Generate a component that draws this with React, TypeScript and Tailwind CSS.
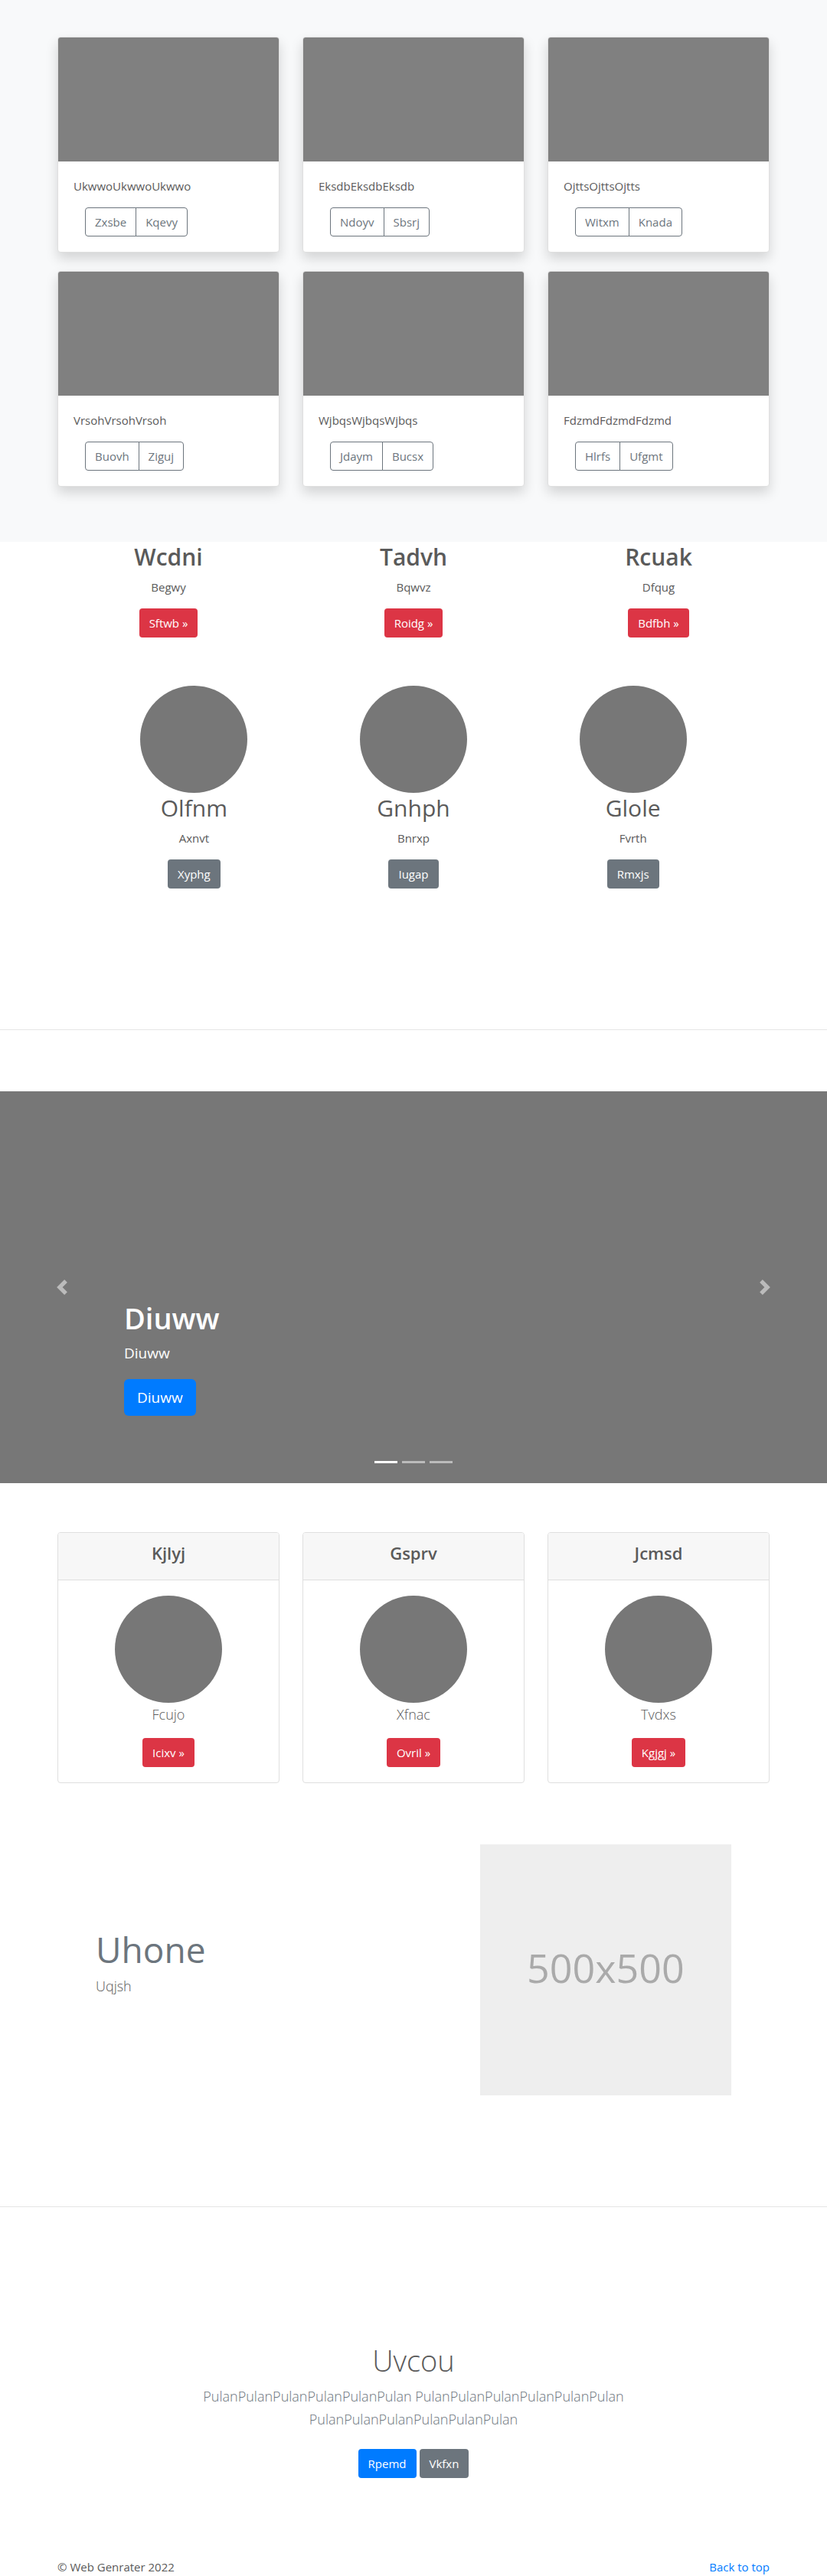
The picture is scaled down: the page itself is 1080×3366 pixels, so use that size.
import type { ReactNode } from "react";

const albumCards = [
  { text: "UkwwoUkwwoUkwwo", left: "Zxsbe", right: "Kqevy" },
  { text: "EksdbEksdbEksdb", left: "Ndoyv", right: "Sbsrj" },
  { text: "OjttsOjttsOjtts", left: "Witxm", right: "Knada" },
  { text: "VrsohVrsohVrsoh", left: "Buovh", right: "Ziguj" },
  { text: "WjbqsWjbqsWjbqs", left: "Jdaym", right: "Bucsx" },
  { text: "FdzmdFdzmdFdzmd", left: "Hlrfs", right: "Ufgmt" },
];

const topics = [
  { title: "Wcdni", text: "Begwy", action: "Sftwb »" },
  { title: "Tadvh", text: "Bqwvz", action: "Roidg »" },
  { title: "Rcuak", text: "Dfqug", action: "Bdfbh »" },
];

const people = [
  { title: "Olfnm", text: "Axnvt", action: "Xyphg" },
  { title: "Gnhph", text: "Bnrxp", action: "Iugap" },
  { title: "Glole", text: "Fvrth", action: "Rmxjs" },
];

const plans = [
  { title: "Kjlyj", text: "Fcujo", action: "Icixv »" },
  { title: "Gsprv", text: "Xfnac", action: "Ovril »" },
  { title: "Jcmsd", text: "Tvdxs", action: "Kgjgj »" },
];

const tones = {
  red: "bg-[#dc3545]",
  gray: "bg-[#6c757d]",
  blue: "bg-[#007bff]",
};

function ButtonLink({ tone, children }: { tone: keyof typeof tones; children: ReactNode }) {
  return (
    <a href="#" className={`inline-flex h-[38px] items-center rounded px-[13px] text-[15px] text-white ${tones[tone]}`}>
      {children}
    </a>
  );
}

function Circle() {
  return <div className="mx-auto size-[140px] rounded-full bg-[#777]" />;
}

function Album() {
  return (
    <section className="bg-[#f8f9fa] py-12">
      <div className="mx-auto grid max-w-[960px] grid-cols-3 gap-x-[30px] gap-y-6 px-[15px] pb-6">
        {albumCards.map((card) => (
          <article
            key={card.text}
            className="overflow-hidden rounded border border-[#dfdfdf] bg-white shadow-[0_8px_16px_rgba(0,0,0,0.15)]"
          >
            <div className="h-[162px] bg-[#808080]" />
            <div className="p-5">
              <p className="mb-4 leading-6">{card.text}</p>
              <div className="ml-[15px] flex text-[#6c757d]">
                <button type="button" className="h-[38px] rounded-l border border-[#6c757d] px-3">
                  {card.left}
                </button>
                <button type="button" className="-ml-px h-[38px] rounded-r border border-[#6c757d] px-3">
                  {card.right}
                </button>
              </div>
            </div>
          </article>
        ))}
      </div>
    </section>
  );
}

function Topics() {
  return (
    <section className="mx-auto grid max-w-[960px] grid-cols-3 text-center">
      {topics.map((topic) => (
        <div key={topic.title} className="flex flex-col items-center px-[15px] pb-4">
          <h2 className="mb-2 text-[30px] leading-[39px] font-semibold">{topic.title}</h2>
          <p className="mb-4 leading-6">{topic.text}</p>
          <ButtonLink tone="red">{topic.action}</ButtonLink>
        </div>
      ))}
    </section>
  );
}

function People() {
  return (
    <section className="mx-auto mt-[47px] grid max-w-[860px] grid-cols-3 pb-[104px] text-center">
      {people.map((person) => (
        <div key={person.title} className="flex flex-col items-center px-[15px]">
          <Circle />
          <h2 className="mb-2 text-[30px] leading-[39px]">{person.title}</h2>
          <p className="mb-4 leading-6">{person.text}</p>
          <ButtonLink tone="gray">{person.action}</ButtonLink>
        </div>
      ))}
    </section>
  );
}

function Carousel() {
  return (
    <section aria-label="Carousel" className="relative h-[512px] bg-[#777] text-white">
      <div className="flex h-full flex-col items-start justify-end px-[15%] pb-[88px]">
        <h1 className="mb-2 text-[38px] leading-[48px] font-semibold">Diuww</h1>
        <p className="mb-5 text-[19px] leading-7 font-medium">Diuww</p>
        <a href="#" className="inline-flex h-12 items-center rounded-md bg-[#007bff] px-[17px] text-[19px] font-medium">
          Diuww
        </a>
      </div>
      <button
        type="button"
        aria-label="Previous"
        className="absolute inset-y-0 left-0 flex w-[15%] items-center justify-center opacity-50"
      >
        <svg viewBox="0 0 8 8" className="size-5 fill-white">
          <path d="M5.25 0l-4 4 4 4 1.5-1.5L4.25 4l2.5-2.5L5.25 0z" />
        </svg>
      </button>
      <button
        type="button"
        aria-label="Next"
        className="absolute inset-y-0 right-0 flex w-[15%] items-center justify-center opacity-50"
      >
        <svg viewBox="0 0 8 8" className="size-5 fill-white">
          <path d="M2.75 0l-1.5 1.5L3.75 4l-2.5 2.5L2.75 8l4-4-4-4z" />
        </svg>
      </button>
      <div className="absolute inset-x-0 bottom-[26px] flex justify-center gap-1.5">
        <button type="button" aria-label="Slide 1" className="h-[3px] w-[30px] bg-white" />
        <button type="button" aria-label="Slide 2" className="h-[3px] w-[30px] bg-white/50" />
        <button type="button" aria-label="Slide 3" className="h-[3px] w-[30px] bg-white/50" />
      </div>
    </section>
  );
}

function Plans() {
  return (
    <section className="mx-auto mt-16 grid max-w-[960px] grid-cols-3 gap-[30px] px-[15px] text-center">
      {plans.map((plan) => (
        <article key={plan.title} className="overflow-hidden rounded border border-[#dfdfdf]">
          <header className="border-b border-[#dfdfdf] bg-[#f7f7f7] pt-3 pb-5">
            <h4 className="text-[22px] leading-[29px] font-semibold">{plan.title}</h4>
          </header>
          <div className="flex flex-col items-center p-5">
            <Circle />
            <p className="mb-4 text-[18px] leading-[30px] font-light">{plan.text}</p>
            <ButtonLink tone="red">{plan.action}</ButtonLink>
          </div>
        </article>
      ))}
    </section>
  );
}

function Featurette() {
  return (
    <section className="mx-auto mt-20 mb-[145px] grid max-w-[860px] grid-cols-12">
      <div className="col-span-7 px-[15px] pt-28">
        <h2 className="mb-2 text-[46px] leading-[50px] text-[#6c757d]">Uhone</h2>
        <p className="text-[18px] leading-[30px] font-light">Uqjsh</p>
      </div>
      <div className="col-span-5 px-[15px]">
        <div className="flex aspect-square w-full items-center justify-center bg-[#eee] pb-1.5 text-[52px] text-[#aaa]">
          500x500
        </div>
      </div>
    </section>
  );
}

function CallToAction() {
  return (
    <section className="mx-auto mt-20 max-w-[640px] px-[15px] pt-24 text-center">
      <h1 className="mb-2 text-[38px] leading-[48px] font-light">Uvcou</h1>
      <p className="mb-6 text-[18px] leading-[30px] font-light text-[#6c757d]">
        PulanPulanPulanPulanPulanPulan PulanPulanPulanPulanPulanPulan PulanPulanPulanPulanPulanPulan
      </p>
      <div className="flex justify-center gap-1">
        <ButtonLink tone="blue">Rpemd</ButtonLink>
        <ButtonLink tone="gray">Vkfxn</ButtonLink>
      </div>
    </section>
  );
}

export default function App() {
  return (
    <div className="bg-white font-['Open_Sans','Noto_Sans',sans-serif] text-[15px] text-[#5a5a5a]">
      <main>
        <Album />
        <Topics />
        <People />
        <hr className="my-20 border-[#e5e5e5]" />
        <Carousel />
        <Plans />
        <Featurette />
        <hr className="border-[#e5e5e5]" />
        <CallToAction />
      </main>
      <footer className="mx-auto mt-[104px] flex max-w-[960px] justify-between px-[15px] leading-6">
        <p>© Web Genrater 2022</p>
        <a href="#" className="text-[#007bff]">
          Back to top
        </a>
      </footer>
    </div>
  );
}
